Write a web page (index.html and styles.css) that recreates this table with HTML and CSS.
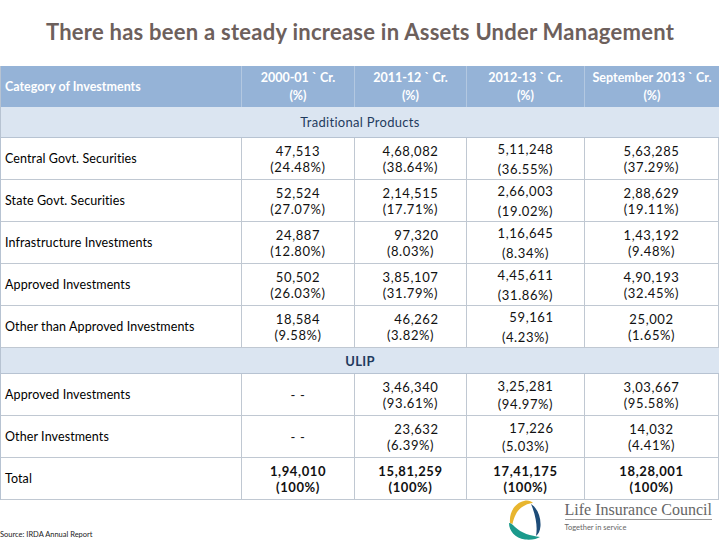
FILE: index.html
```html
<!DOCTYPE html>
<html lang="en">
<head>
<meta charset="utf-8">
<title>Assets Under Management</title>
<link rel="stylesheet" href="styles.css">
</head>
<body>
<div class="slide">
  <h1 class="title">There has been a steady increase in Assets Under Management</h1>
  <table class="aum">
    <colgroup>
      <col class="c0"><col class="c1"><col class="c2"><col class="c3"><col class="c4">
    </colgroup>
    <thead>
      <tr class="head">
        <th class="cat">Category of Investments</th>
        <th>2000-01 ` Cr.<br>(%)</th>
        <th>2011-12 ` Cr.<br>(%)</th>
        <th>2012-13 ` Cr.<br>(%)</th>
        <th class="last">September 2013 ` Cr.<br>(%)</th>
      </tr>
    </thead>
    <tbody>
      <tr class="band trad"><td colspan="5">Traditional Products</td></tr>
      <tr class="row">
        <td class="label">Central Govt. Securities</td>
        <td><span class="ln">47,513</span><span class="ln">(24.48%)</span></td>
        <td><span class="ln">4,68,082</span><span class="ln">(38.64%)</span></td>
        <td class="wide"><span class="ln">5,11,248</span><span class="ln">(36.55%)</span></td>
        <td class="last"><span class="ln">5,63,285</span><span class="ln">(37.29%)</span></td>
      </tr>
      <tr class="row">
        <td class="label">State Govt. Securities</td>
        <td><span class="ln">52,524</span><span class="ln">(27.07%)</span></td>
        <td><span class="ln">2,14,515</span><span class="ln">(17.71%)</span></td>
        <td class="wide"><span class="ln">2,66,003</span><span class="ln">(19.02%)</span></td>
        <td class="last"><span class="ln">2,88,629</span><span class="ln">(19.11%)</span></td>
      </tr>
      <tr class="row">
        <td class="label">Infrastructure Investments</td>
        <td><span class="ln">24,887</span><span class="ln">(12.80%)</span></td>
        <td><span class="ln shift">97,320</span><span class="ln">(8.03%)</span></td>
        <td class="wide"><span class="ln">1,16,645</span><span class="ln">(8.34%)</span></td>
        <td class="last"><span class="ln">1,43,192</span><span class="ln">(9.48%)</span></td>
      </tr>
      <tr class="row">
        <td class="label">Approved Investments</td>
        <td><span class="ln">50,502</span><span class="ln">(26.03%)</span></td>
        <td><span class="ln">3,85,107</span><span class="ln">(31.79%)</span></td>
        <td class="wide"><span class="ln">4,45,611</span><span class="ln">(31.86%)</span></td>
        <td class="last"><span class="ln">4,90,193</span><span class="ln">(32.45%)</span></td>
      </tr>
      <tr class="row">
        <td class="label">Other than Approved Investments</td>
        <td><span class="ln">18,584</span><span class="ln">(9.58%)</span></td>
        <td><span class="ln shift">46,262</span><span class="ln">(3.82%)</span></td>
        <td class="wide"><span class="ln shift">59,161</span><span class="ln">(4.23%)</span></td>
        <td class="last"><span class="ln">25,002</span><span class="ln">(1.65%)</span></td>
      </tr>
      <tr class="band ulip"><td colspan="5">ULIP</td></tr>
      <tr class="row">
        <td class="label">Approved Investments</td>
        <td><span class="ln">- -</span></td>
        <td><span class="ln">3,46,340</span><span class="ln">(93.61%)</span></td>
        <td class="mid"><span class="ln">3,25,281</span><span class="ln">(94.97%)</span></td>
        <td class="last"><span class="ln">3,03,667</span><span class="ln">(95.58%)</span></td>
      </tr>
      <tr class="row">
        <td class="label">Other Investments</td>
        <td><span class="ln">- -</span></td>
        <td><span class="ln shift">23,632</span><span class="ln">(6.39%)</span></td>
        <td class="mid"><span class="ln shift">17,226</span><span class="ln">(5.03%)</span></td>
        <td class="last"><span class="ln">14,032</span><span class="ln">(4.41%)</span></td>
      </tr>
      <tr class="row total">
        <td class="label">Total</td>
        <td><span class="ln">1,94,010</span><span class="ln">(100%)</span></td>
        <td><span class="ln">15,81,259</span><span class="ln">(100%)</span></td>
        <td><span class="ln">17,41,175</span><span class="ln">(100%)</span></td>
        <td class="last"><span class="ln">18,28,001</span><span class="ln">(100%)</span></td>
      </tr>
    </tbody>
  </table>
  <footer class="foot">
    <div class="source">Source: IRDA Annual Report</div>
    <div class="brand">
      <svg class="logo" width="32" height="40" viewBox="0 0 32 40" aria-hidden="true">
        <path d="M1,23 C0,12 6,3 15,1 C19,0 22,1 24,3 C17,3.5 10,8 7,14 C5,18 4,21 3.5,24 Z" fill="#e8b52e"/>
        <path d="M22,4 C28,8 32,16 31.5,26 C31,31 29.5,34 27,36 C28.5,28 27.5,17 22,4 Z" fill="#1d4c78"/>
        <path d="M0,23 C0,31 6,38 16,39.5 C23,40 28,39 31,37 C22,36 12,33 6,27 C4,25 2,23 0,23 Z" fill="#1b9a8c"/>
      </svg>
      <div class="brand-text">
        <div class="brand-name">Life Insurance Council</div>
        <div class="brand-tag">Together in service</div>
      </div>
    </div>
  </footer>
</div>
</body>
</html>
```

FILE: styles.css
```css
html, body {
  margin: 0;
  padding: 0;
  background: #ffffff;
}

body {
  width: 720px;
  height: 540px;
  overflow: hidden;
  font-family: Lato, "Open Sans", sans-serif;
  color: #111111;
}

.slide {
  display: flex;
  flex-direction: column;
  width: 720px;
  height: 540px;
}

.title {
  margin: 0;
  height: 66px;
  box-sizing: border-box;
  padding-top: 18px;
  text-align: center;
  font-size: 22px;
  line-height: 28px;
  font-weight: 700;
  letter-spacing: 0.25px;
  color: #6d605c;
}

.aum {
  border-collapse: separate;
  border-spacing: 0;
  table-layout: fixed;
  width: 719px;
  border-left: 1px solid #b7c3d2;
}

.c0 { width: 241px; }
.c1 { width: 113px; }
.c2 { width: 112px; }
.c3 { width: 118px; }
.c4 { width: 134px; }

.head {
  height: 41px;
}

.head th {
  padding: 0;
  background: #95b3d7;
  color: #ffffff;
  font-size: 12.5px;
  line-height: 18px;
  font-weight: 700;
  text-align: center;
  vertical-align: middle;
  border-right: 1px solid #b3c8e1;
}

.head th.cat {
  text-align: left;
  padding-left: 4px;
}

.head th.last {
  border-right: none;
}

.band td {
  padding: 0;
  background: #dbe5f1;
  text-align: center;
  vertical-align: middle;
  color: #1f3b5e;
  font-size: 13px;
  letter-spacing: 0.3px;
  border-bottom: 1px solid #b7c3d2;
}

.band.trad {
  height: 31px;
}

.band.ulip {
  height: 26px;
}

.band.ulip td {
  font-weight: 700;
}

.row {
  height: 42px;
}

.row td {
  padding: 0;
  text-align: center;
  vertical-align: middle;
  font-size: 13px;
  letter-spacing: 0.6px;
  line-height: 16px;
  color: #111111;
  border-right: 1px solid #c0c8d2;
  border-bottom: 1px solid #c0c8d2;
}

.row td.last {
  border-right: 1px solid #c0c8d2;
}

.row td.label {
  text-align: left;
  padding-left: 4px;
  font-size: 12.5px;
  letter-spacing: 0.1px;
  color: #000000;
}

.row td.wide {
  line-height: 20px;
}

.row td.mid {
  line-height: 18px;
}

.ln {
  display: block;
}

.ln.shift {
  padding-left: 12px;
}

.total td {
  font-weight: 700;
}

.total td.label {
  font-weight: 400;
}

.foot {
  flex: 1;
  display: flex;
  justify-content: space-between;
  align-items: flex-end;
}

.source {
  font-size: 7.5px;
  line-height: 9px;
  color: #222222;
  padding-bottom: 1px;
}

.brand {
  align-self: stretch;
  display: flex;
  align-items: flex-start;
  gap: 24px;
  margin-right: 8px;
}

.logo {
  display: block;
}

.brand-text {
  padding-top: 1px;
}

.brand-name {
  font-family: "Liberation Serif", "DejaVu Serif", serif;
  font-size: 16px;
  line-height: 17px;
  color: #666666;
  border-bottom: 1px solid #9a9a9a;
  padding-bottom: 1px;
}

.brand-tag {
  margin-top: 3px;
  font-size: 7.5px;
  line-height: 9px;
  color: #666666;
}
```
